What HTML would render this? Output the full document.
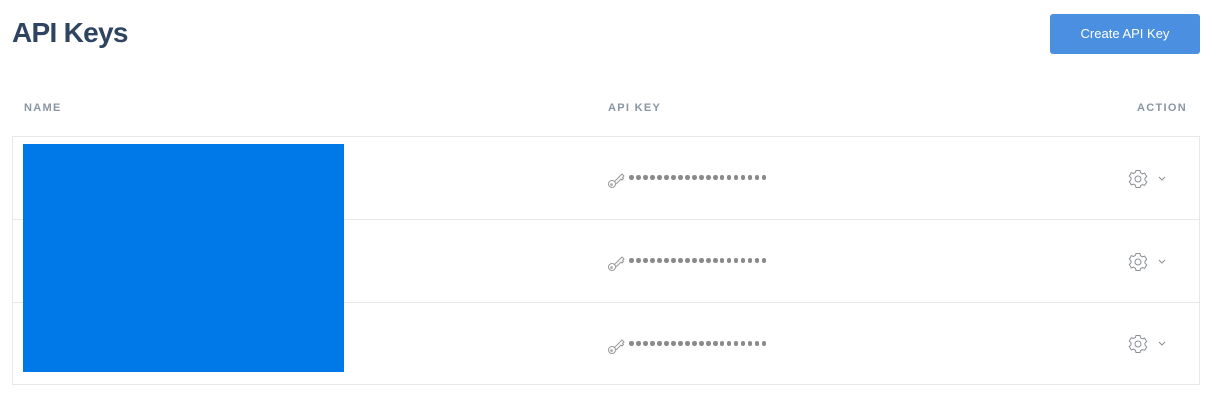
<!DOCTYPE html>
<html><head><style>
body{margin:0;width:1225px;height:402px;background:#fff;font-family:"Liberation Sans",sans-serif;position:relative;overflow:hidden}
.a{position:absolute}
h1{position:absolute;left:12px;top:17px;margin:0;font-size:28px;font-weight:bold;color:#2e4461;letter-spacing:-0.7px}
.btn{left:1050px;top:14px;width:150px;height:40px;background:#4a8fe0;border-radius:3px;color:#fff;font-size:13px;text-align:center;line-height:40px}
.th{top:102px;font-size:11px;font-weight:bold;color:#8a96a3;letter-spacing:1.3px}
.tbl{left:12px;top:136px;width:1186px;height:247px;border:1px solid #e6e8ea}
.hr{left:13px;width:1186px;height:1px;background:#e6e8ea}
.dots{display:flex;gap:2.3px}
.dots i{width:4.7px;height:4.7px;border-radius:50%;background:#8a8a8a;display:block}
</style></head><body>
<h1>API Keys</h1>
<div class="a btn">Create API Key</div>
<div class="a th" style="left:24px">NAME</div>
<div class="a th" style="left:608px">API KEY</div>
<div class="a th" style="left:1137px">ACTION</div>
<div class="a tbl"></div>
<div class="a hr" style="top:219px"></div>
<div class="a hr" style="top:302px"></div>
<div class="a" style="left:23px;top:144px;width:321px;height:228px;background:#0079e8"></div>
<div class="a" style="left:607px;top:170px">
<svg width="20" height="20" viewBox="0 0 20 20" fill="none" stroke="#999" stroke-width="1"><circle cx="5" cy="14" r="3.5"/><path d="M7.5 11.5L15 4l2 2-1.5 1.5 1 1-1.5 1.5-1-1L9 14"/><circle cx="4.5" cy="14.5" r="0.8"/></svg></div>
<div class="a dots" style="left:629px;top:175px"><i></i><i></i><i></i><i></i><i></i><i></i><i></i><i></i><i></i><i></i><i></i><i></i><i></i><i></i><i></i><i></i><i></i><i></i><i></i><i></i></div>
<div class="a" style="left:607px;top:253px">
<svg width="20" height="20" viewBox="0 0 20 20" fill="none" stroke="#999" stroke-width="1"><circle cx="5" cy="14" r="3.5"/><path d="M7.5 11.5L15 4l2 2-1.5 1.5 1 1-1.5 1.5-1-1L9 14"/><circle cx="4.5" cy="14.5" r="0.8"/></svg></div>
<div class="a dots" style="left:629px;top:258px"><i></i><i></i><i></i><i></i><i></i><i></i><i></i><i></i><i></i><i></i><i></i><i></i><i></i><i></i><i></i><i></i><i></i><i></i><i></i><i></i></div>
<div class="a" style="left:607px;top:336px">
<svg width="20" height="20" viewBox="0 0 20 20" fill="none" stroke="#999" stroke-width="1"><circle cx="5" cy="14" r="3.5"/><path d="M7.5 11.5L15 4l2 2-1.5 1.5 1 1-1.5 1.5-1-1L9 14"/><circle cx="4.5" cy="14.5" r="0.8"/></svg></div>
<div class="a dots" style="left:629px;top:341px"><i></i><i></i><i></i><i></i><i></i><i></i><i></i><i></i><i></i><i></i><i></i><i></i><i></i><i></i><i></i><i></i><i></i><i></i><i></i><i></i></div>
<div class="a" style="left:1128px;top:169px"><svg width="44" height="20" viewBox="0 0 44 20" fill="none" stroke="#8a8f96" stroke-width="1"><path d="M8 1.5h4l.6 2.3 1.8 1 2.3-.7 2 3.4-1.7 1.7v2l1.7 1.7-2 3.4-2.3-.7-1.8 1L12 18.5H8l-.6-2.3-1.8-1-2.3.7-2-3.4L3 10.8v-2L1.3 7.1l2-3.4 2.3.7 1.8-1z"/><circle cx="10" cy="10" r="3"/><path d="M31 8l3 3 3-3"/></svg></div>
<div class="a" style="left:1128px;top:252px"><svg width="44" height="20" viewBox="0 0 44 20" fill="none" stroke="#8a8f96" stroke-width="1"><path d="M8 1.5h4l.6 2.3 1.8 1 2.3-.7 2 3.4-1.7 1.7v2l1.7 1.7-2 3.4-2.3-.7-1.8 1L12 18.5H8l-.6-2.3-1.8-1-2.3.7-2-3.4L3 10.8v-2L1.3 7.1l2-3.4 2.3.7 1.8-1z"/><circle cx="10" cy="10" r="3"/><path d="M31 8l3 3 3-3"/></svg></div>
<div class="a" style="left:1128px;top:334px"><svg width="44" height="20" viewBox="0 0 44 20" fill="none" stroke="#8a8f96" stroke-width="1"><path d="M8 1.5h4l.6 2.3 1.8 1 2.3-.7 2 3.4-1.7 1.7v2l1.7 1.7-2 3.4-2.3-.7-1.8 1L12 18.5H8l-.6-2.3-1.8-1-2.3.7-2-3.4L3 10.8v-2L1.3 7.1l2-3.4 2.3.7 1.8-1z"/><circle cx="10" cy="10" r="3"/><path d="M31 8l3 3 3-3"/></svg></div>
</body></html>
